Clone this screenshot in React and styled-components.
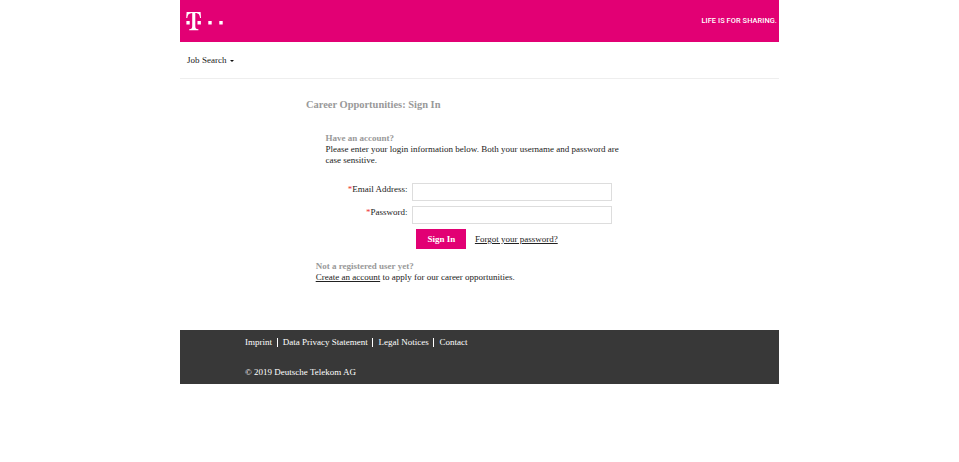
import React from "react";
import styled, { createGlobalStyle } from "styled-components";

const GlobalStyle = createGlobalStyle`
  * { box-sizing: border-box; }
  body {
    margin: 0;
    background: #fff;
    color: #222;
    font-family: "Liberation Serif", "Times New Roman", serif;
    font-size: 9px;
    line-height: 11px;
  }
`;

const Page = styled.div`
  width: 599px;
  margin-left: 180px;
`;

const Banner = styled.header`
  display: flex;
  justify-content: space-between;
  height: 42.4px;
  padding: 11px 2px 0 6px;
  background: #e20074;
`;

const Slogan = styled.span`
  margin-top: 4px;
  color: #fff;
  font: 500 7.4px/12px Roboto, sans-serif;
  letter-spacing: 0.08px;
  white-space: nowrap;
`;

const Nav = styled.nav`
  display: flex;
  align-items: flex-start;
  height: 36.6px;
  padding: 12.6px 7px 0;
  border-bottom: 1px solid #eee;
`;

const MenuButton = styled.a`
  display: flex;
  align-items: center;
  gap: 3px;
  color: #222;
  letter-spacing: 0.04px;
`;

const Caret = styled.span`
  margin-top: 2px;
  border: 2.5px solid transparent;
  border-top-color: #111;
  border-bottom: 0;
`;

const Main = styled.main`
  height: 251px;
  padding: 19px 126px 0;
`;

const Title = styled.h1`
  margin: 0;
  color: #999;
  font-size: 10.45px;
  line-height: 13px;
`;

const Login = styled.section`
  margin: 22px 0 0 19.5px;
`;

const Heading = styled.h2`
  margin: 0;
  color: #999;
  font-size: 9px;
  line-height: 11.5px;
`;

const Text = styled.p`
  margin: 0;
  line-height: 10.7px;
  white-space: nowrap;
`;

const Form = styled.form`
  display: grid;
  grid-template-columns: 82px 200px;
  column-gap: 4.9px;
  row-gap: 5px;
  margin-top: 17px;
`;

const Label = styled.label`
  padding-top: 1px;
  text-align: right;
  white-space: nowrap;
`;

const Required = styled.span`
  color: #e33;
`;

const Input = styled.input`
  width: 200px;
  height: 18px;
  padding: 2px 4px;
  border: 1px solid #ddd;
  border-radius: 0;
  font: inherit;
`;

const Actions = styled.div`
  display: flex;
  grid-column: 2;
  align-items: center;
  gap: 8.5px;
  padding-left: 4px;
`;

const SubmitButton = styled.button`
  width: 50px;
  height: 20px;
  padding: 0;
  border: 0;
  background: #e20074;
  color: #fff;
  font: bold 9px/20px "Liberation Serif", "Times New Roman", serif;
`;

const Link = styled.a`
  color: #222;
  text-decoration: underline;
  white-space: nowrap;
`;

const ResetLink = styled(Link)`
  padding-top: 1px;
`;

const Register = styled.section`
  margin: 12px 0 0 9.7px;
`;

const Footer = styled.footer`
  height: 54px;
  padding: 7px 65px 0;
  background: #383838;
  color: #fff;
`;

const FooterLinks = styled.div`
  display: flex;
  align-items: center;
  height: 11px;
  margin-bottom: 19px;
`;

const FooterLink = styled.a`
  color: #fff;
  white-space: nowrap;

  & + & {
    margin-left: 4.7px;
    padding-left: 5.1px;
    border-left: 1px solid #fff;
    line-height: 9px;
  }
`;

function Logo() {
  return (
    <svg width="38" height="20" viewBox="0 0 38 20" fill="#fff" aria-label="Telekom">
      <path d="M.6 1h14l.4 6h-1c-.2-3-1.4-4.8-4.7-4.9v13.2c0 2 .7 2.8 3.1 2.9v1H3.2v-1c2.4-.1 3-.9 3-2.9V2.1C2.900 2.200 1.500 4 1.300 7H.2z" />
      <path d="M.4 10h3.300v3.400H.4zM11.500 10h3.400v3.400h-3.400zM22.300 10h3.400v3.400h-3.400zM33.300 10h3.400v3.400h-3.400z" />
    </svg>
  );
}

export default function App() {
  return (
    <>
      <GlobalStyle />
      <Page>
        <Banner>
          <Logo />
          <Slogan>LIFE IS FOR SHARING.</Slogan>
        </Banner>
        <Nav>
          <MenuButton>Job Search<Caret /></MenuButton>
        </Nav>
        <Main>
          <Title>Career Opportunities: Sign In</Title>
          <Login>
            <Heading>Have an account?</Heading>
            <Text>
              Please enter your login information below. Both your username and password are
              <br />
              case sensitive.
            </Text>
            <Form>
              <Label htmlFor="email"><Required>*</Required>Email Address:</Label>
              <Input id="email" />
              <Label htmlFor="password"><Required>*</Required>Password:</Label>
              <Input id="password" type="password" />
              <Actions>
                <SubmitButton type="button">Sign In</SubmitButton>
                <ResetLink>Forgot your password?</ResetLink>
              </Actions>
            </Form>
          </Login>
          <Register>
            <Heading>Not a registered user yet?</Heading>
            <Text><Link>Create an account</Link> to apply for our career opportunities.</Text>
          </Register>
        </Main>
        <Footer>
          <FooterLinks>
            <FooterLink>Imprint</FooterLink>
            <FooterLink>Data Privacy Statement</FooterLink>
            <FooterLink>Legal Notices</FooterLink>
            <FooterLink>Contact</FooterLink>
          </FooterLinks>
          <div>© 2019 Deutsche Telekom AG</div>
        </Footer>
      </Page>
    </>
  );
}
